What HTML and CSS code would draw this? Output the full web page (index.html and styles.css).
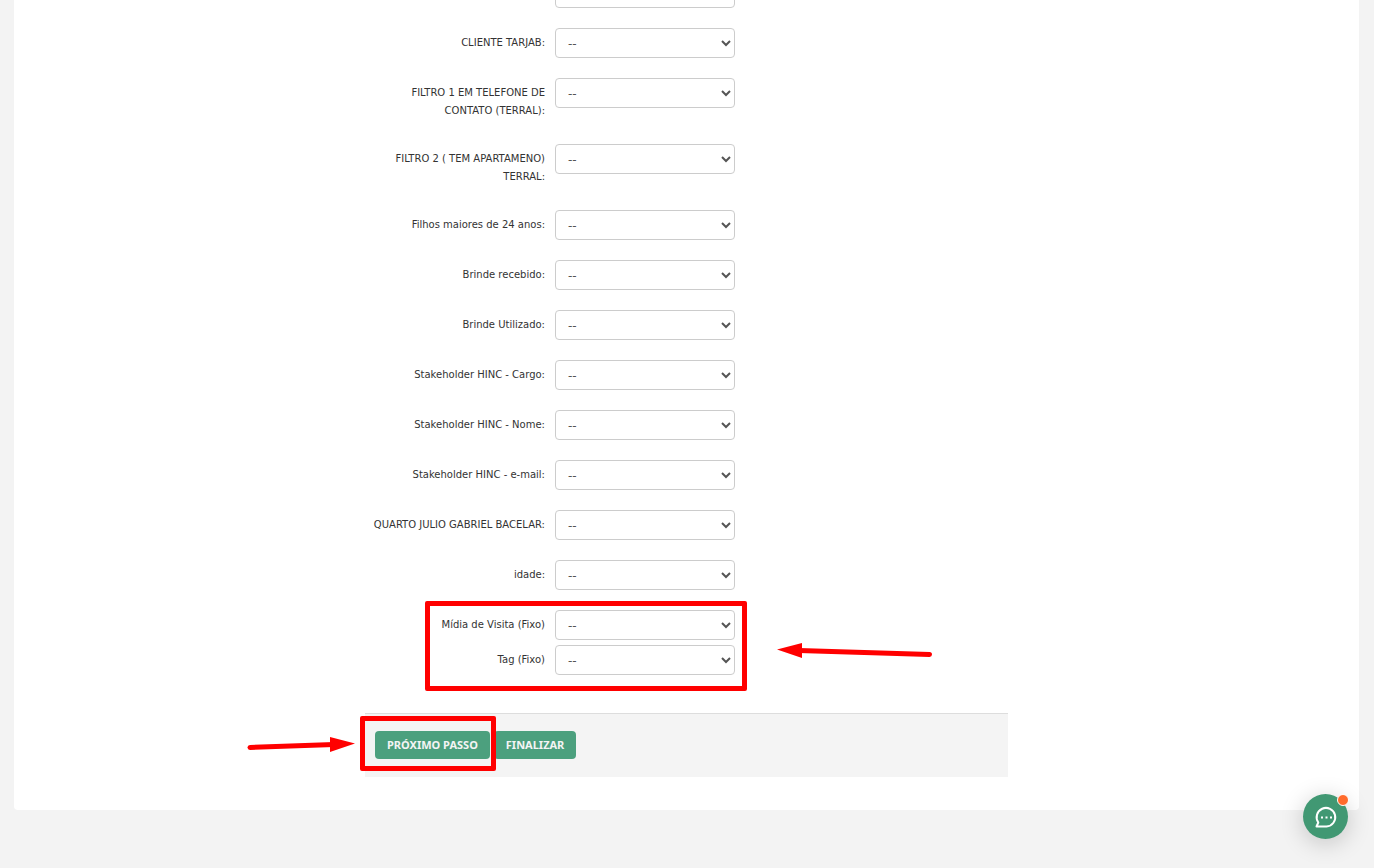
FILE: index.html
```
<!DOCTYPE html>
<html lang="pt-BR">

<head>
    <meta charset="UTF-8">
    <meta name="viewport" content="width=device-width, initial-scale=1.0">
    <title>Cadastro de Visita</title>
    <link rel="stylesheet" href="styles.css">
</head>

<body>
    <main class="page">
        <form class="visit-form">
            <div class="field">
                <span class="field-label"></span>
                <select aria-label="Cliente"><option>--</option></select>
            </div>
            <div class="field">
                <label class="field-label" for="tarjab">CLIENTE TARJAB:</label>
                <select id="tarjab"><option>--</option></select>
            </div>
            <div class="field">
                <label class="field-label" for="filtro1">FILTRO 1 EM TELEFONE DE CONTATO (TERRAL):</label>
                <select id="filtro1"><option>--</option></select>
            </div>
            <div class="field">
                <label class="field-label" for="filtro2">FILTRO 2 ( TEM APARTAMENO) TERRAL:</label>
                <select id="filtro2"><option>--</option></select>
            </div>
            <div class="field">
                <label class="field-label" for="filhos">Filhos maiores de 24 anos:</label>
                <select id="filhos"><option>--</option></select>
            </div>
            <div class="field">
                <label class="field-label" for="brindeRecebido">Brinde recebido:</label>
                <select id="brindeRecebido"><option>--</option></select>
            </div>
            <div class="field">
                <label class="field-label" for="brindeUtilizado">Brinde Utilizado:</label>
                <select id="brindeUtilizado"><option>--</option></select>
            </div>
            <div class="field">
                <label class="field-label" for="hincCargo">Stakeholder HINC - Cargo:</label>
                <select id="hincCargo"><option>--</option></select>
            </div>
            <div class="field">
                <label class="field-label" for="hincNome">Stakeholder HINC - Nome:</label>
                <select id="hincNome"><option>--</option></select>
            </div>
            <div class="field">
                <label class="field-label" for="hincEmail">Stakeholder HINC - e-mail:</label>
                <select id="hincEmail"><option>--</option></select>
            </div>
            <div class="field">
                <label class="field-label" for="quarto">QUARTO JULIO GABRIEL BACELAR:</label>
                <select id="quarto"><option>--</option></select>
            </div>
            <div class="field">
                <label class="field-label" for="idade">idade:</label>
                <select id="idade"><option>--</option></select>
            </div>

            <div class="fixed-fields">
                <div class="field">
                    <label class="field-label" for="midia">Mídia de Visita (Fixo)</label>
                    <select id="midia"><option>--</option></select>
                </div>
                <div class="field">
                    <label class="field-label" for="tag">Tag (Fixo)</label>
                    <select id="tag"><option>--</option></select>
                </div>
                <div class="mark mark-fields"></div>
                <svg class="arrow arrow-fields" width="156" height="18" viewBox="0 0 156 18" aria-hidden="true">
                    <path d="M22 9.500L152.500 13.500" stroke="#f00" stroke-width="5" stroke-linecap="round" />
                    <path d="M0 8.500L25 2V17Z" fill="#f00" />
                </svg>
            </div>

            <div class="actions">
                <button type="button">PRÓXIMO PASSO</button>
                <button type="button">FINALIZAR</button>
                <div class="mark mark-next"></div>
                <svg class="arrow arrow-next" width="110" height="18" viewBox="0 0 110 18" aria-hidden="true">
                    <path d="M4 11.500L88 8.500" stroke="#f00" stroke-width="5" stroke-linecap="round" />
                    <path d="M109 7.500L84 1V16Z" fill="#f00" />
                </svg>
            </div>
        </form>
    </main>

    <button type="button" class="chat" aria-label="Chat">
        <svg width="24" height="24" viewBox="0 0 24 24" fill="none" aria-hidden="true">
            <path d="M2.500 21.500L4.300 17.500A9.300 9.300 0 1 1 12.500 21.500Z" stroke="#fff" stroke-width="2" stroke-linejoin="round" />
            <path d="M7 11.500h2v2h-2zM11.500 11.500h2v2h-2zM16 11.500h2v2h-2z" fill="#fff" />
        </svg>
        <span class="chat-dot"></span>
    </button>
</body>

</html>
```

FILE: styles.css
```
* {
    box-sizing: border-box;
}

body {
    margin: 0;
    font-family: Verdana, "DejaVu Sans", sans-serif;
    font-size: 10px;
    line-height: 18px;
    color: #333;
    background-color: #f3f3f3;
}

.page {
    display: flow-root;
    margin: 0 15px 58px 14px;
    padding-bottom: 33px;
    background-color: #fff;
    border-radius: 0 0 4px 4px;
}

/* the form continues above the visible area */
.visit-form {
    max-width: 643px;
    margin: -22px auto 0;
}

.field {
    display: flex;
    align-items: flex-start;
    gap: 10px;
    margin-bottom: 20px;
}

.field-label {
    width: 180px;
    padding: 6px 0 4px;
    text-align: right;
}

select {
    width: 180px;
    height: 30px;
    padding: 2px 1px 0 8px;
    font-family: inherit;
    font-size: 12px;
    color: #555;
    background-color: #fff;
    border: 1px solid #ccc;
    border-radius: 4px;
}

/* Fixed fields */
.fixed-fields {
    position: relative;
    margin-bottom: 38px;
}

.fixed-fields .field {
    height: 30px;
    margin-bottom: 5px;
}

.fixed-fields .field + .field {
    margin-bottom: 0;
}

/* Footer buttons */
.actions {
    position: relative;
    display: flex;
    gap: 4px;
    padding: 17px 10px 18px;
    background-color: #f4f4f4;
    border-top: 1px solid #ddd;
}

.actions button {
    height: 28px;
    padding: 0 12px 2px;
    font-family: "Noto Sans", sans-serif;
    font-size: 11px;
    font-weight: bold;
    color: #f4f4f4;
    background-color: #4ca07e;
    border: none;
    border-radius: 4px;
    cursor: pointer;
}

/* Red marks over the form */
.mark {
    position: absolute;
    border: 5px solid #f00;
    border-radius: 2px;
    pointer-events: none;
}

.mark-fields {
    top: -9px;
    left: 60px;
    width: 322px;
    height: 90px;
}

.mark-next {
    top: 2px;
    left: -5px;
    width: 136px;
    height: 55px;
}

.arrow {
    position: absolute;
    pointer-events: none;
}

.arrow-fields {
    top: 31px;
    left: 412px;
}

.arrow-next {
    top: 22px;
    left: -119px;
}

/* Chat button */
.chat {
    position: fixed;
    right: 26px;
    bottom: 29px;
    display: flex;
    align-items: center;
    justify-content: center;
    width: 45px;
    height: 45px;
    padding: 0;
    background-color: #419873;
    border: none;
    border-radius: 50%;
    box-shadow: 0 4px 24px rgba(0, 0, 0, 0.2);
    cursor: pointer;
}

.chat-dot {
    position: absolute;
    top: 0;
    right: -1px;
    width: 12px;
    height: 12px;
    background-color: #ff6b2c;
    border: 1px solid #fff;
    border-radius: 50%;
}
```
